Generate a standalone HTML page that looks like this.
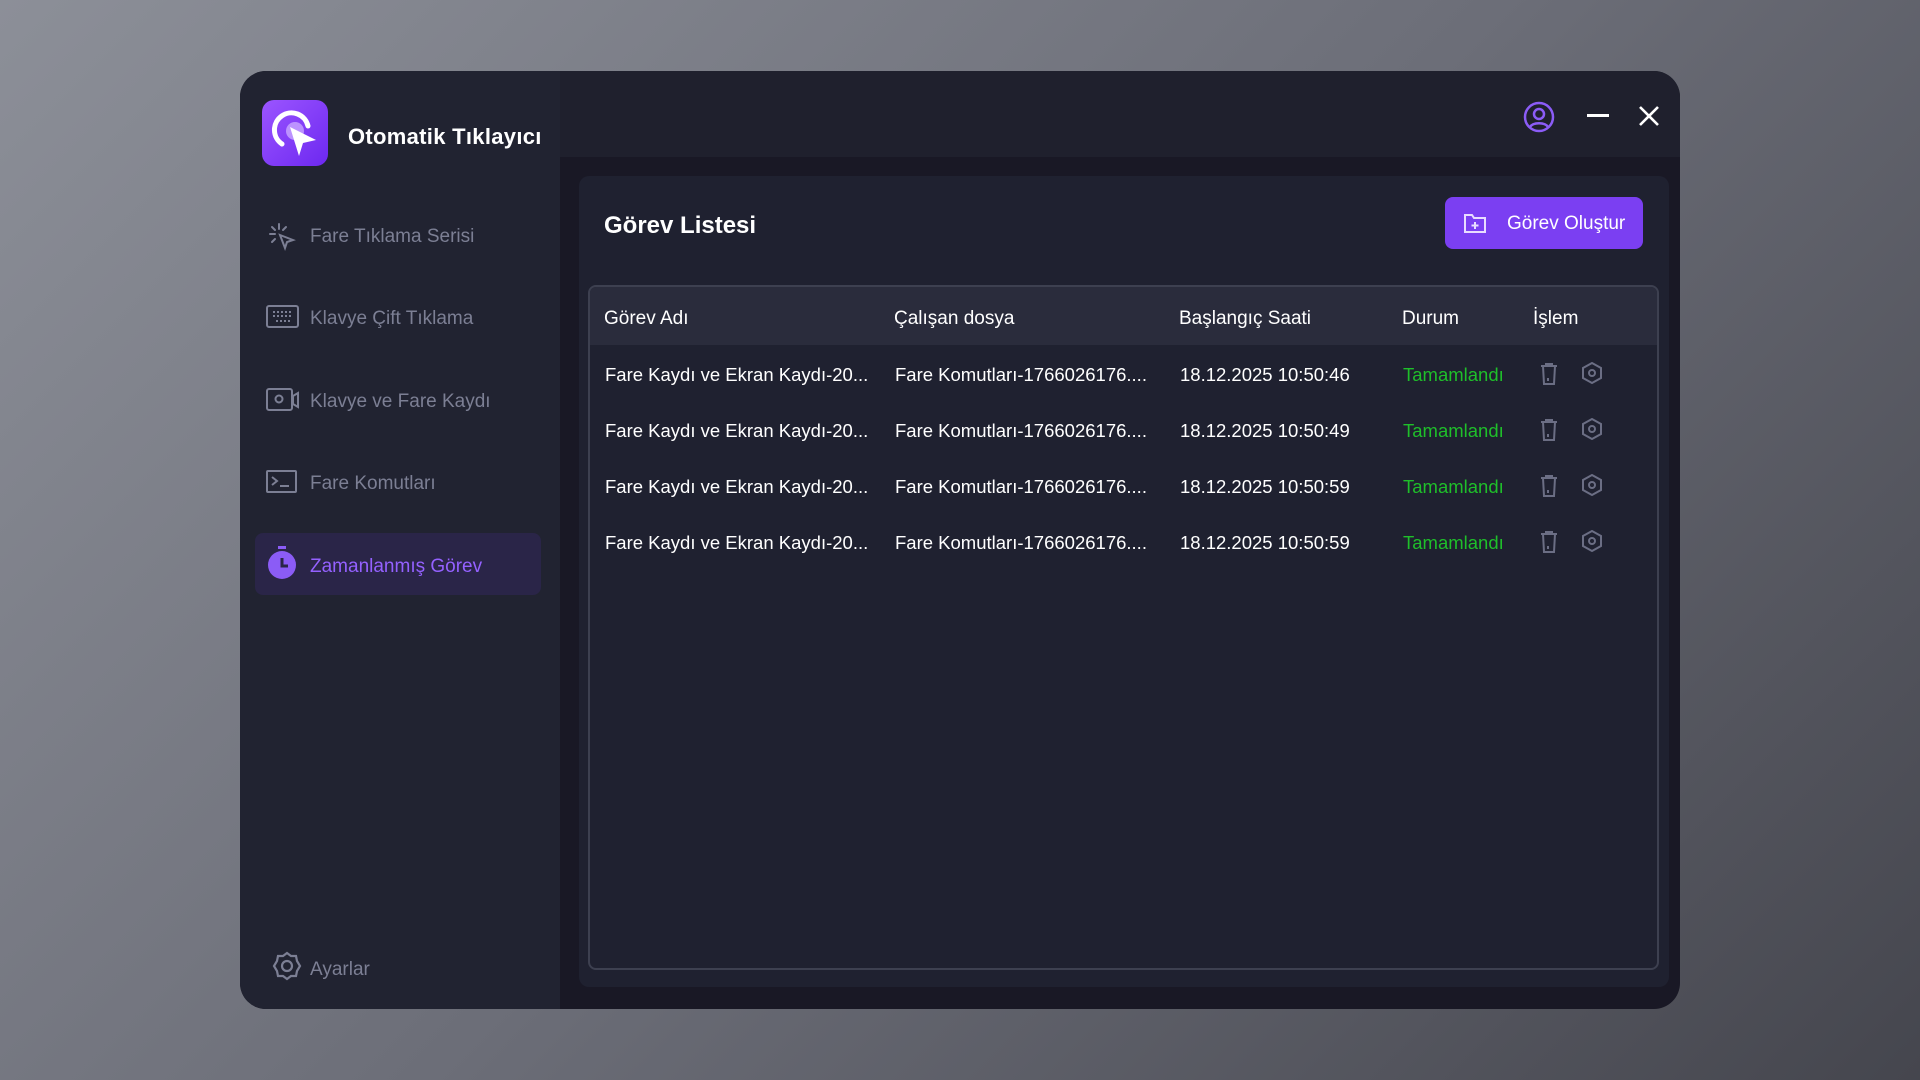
<!DOCTYPE html>
<html><head><meta charset="utf-8"><style>
*{margin:0;padding:0;box-sizing:border-box}
body{width:1920px;height:1080px;overflow:hidden;background:linear-gradient(135deg,#8c8f98 0%,#6c6e78 50%,#45464e 100%);font-family:"Liberation Sans",sans-serif;position:relative}
.win{position:absolute;left:240px;top:71px;width:1440px;height:938px;border-radius:26px;background:#191825;overflow:hidden}
.side{position:absolute;left:0;top:0;width:320px;height:100%;background:#212331}
.top{position:absolute;left:320px;top:0;right:0;height:86px;background:#1f202d}
.logo{position:absolute;left:22px;top:29px;width:66px;height:66px;border-radius:12px;background:linear-gradient(135deg,#9b55ff,#6d28f0)}
.title{position:absolute;left:108px;top:53px;color:#fff;font-weight:bold;font-size:22px;letter-spacing:0.3px}
.nav{position:absolute;left:70px;color:#7c7f94;font-size:19px;margin-top:2px}
.ic{position:absolute;left:26px}
.active{position:absolute;left:15px;top:462px;width:286px;height:62px;border-radius:8px;background:#2a2548}
.panel{position:absolute;left:339px;top:105px;width:1090px;height:811px;background:#1f2130;border-radius:10px}
.ptitle{position:absolute;left:25px;top:36px;color:#fff;font-weight:bold;font-size:24px}
.btn{position:absolute;left:866px;top:21px;width:198px;height:52px;background:#7b3ff2;border-radius:8px;color:#fff;font-size:19px;line-height:54px;padding-left:62px}
.tbl{position:absolute;left:9px;top:109px;width:1071px;height:685px;border:2px solid #3d4050;border-radius:8px;overflow:hidden}
.th{position:absolute;left:0;top:0;right:0;height:58px;background:#2a2c3c}
.c{position:absolute;color:#fff;font-size:19px;white-space:nowrap}
.g{color:#1fbf2a}
</style></head><body>
<div class="win">
<div class="side">
 <div class="logo"><svg width="66" height="66" viewBox="0 0 66 66"><path d="M20 44 A17 17 0 1 1 46 26" fill="none" stroke="#fff" stroke-width="5" stroke-linecap="round"/><circle cx="33" cy="31" r="9" fill="#c9a8ff" opacity=".8"/><path d="M28 27 L54 40 L41 43 L37 56 Z" fill="#fff"/></svg></div>
 <div class="title">Otomatik Tıklayıcı</div>
 <svg class="ic" style="top:150px" width="32" height="32" viewBox="0 0 32 32" fill="none" stroke="#7c7f94" stroke-width="2" stroke-linecap="round"><path d="M13 3v5M4 13h5M6 6l3 3M20 6l-3 3M6 21l3-3"/><path d="M14 14l13 5-6 2-2 6z"/></svg>
 <div class="nav" style="top:153px">Fare Tıklama Serisi</div>
 <svg class="ic" style="top:233px" width="34" height="26" viewBox="0 0 34 26" fill="none" stroke="#7c7f94" stroke-width="2"><rect x="1" y="2" width="31" height="21" rx="2"/><path d="M7 8h20M7 12h20M10 17h14" stroke-dasharray="2 2"/></svg>
 <div class="nav" style="top:235px">Klavye Çift Tıklama</div>
 <svg class="ic" style="top:316px" width="34" height="26" viewBox="0 0 34 26" fill="none" stroke="#7c7f94" stroke-width="2"><rect x="1" y="2" width="25" height="21" rx="2"/><circle cx="13" cy="12" r="3.5"/><path d="M27 9l5-3v14l-5-3z"/></svg>
 <div class="nav" style="top:318px">Klavye ve Fare Kaydı</div>
 <svg class="ic" style="top:398px" width="32" height="26" viewBox="0 0 32 26" fill="none" stroke="#7c7f94" stroke-width="2"><rect x="1" y="2" width="29" height="21" rx="1"/><path d="M6 8l5 4-5 4M14 17h9"/></svg>
 <div class="nav" style="top:400px">Fare Komutları</div>
 <div class="active"></div>
 <svg class="ic" style="top:474px" width="32" height="36" viewBox="0 0 32 36"><rect x="12" y="1" width="8" height="3" fill="#8b5cf6"/><circle cx="16" cy="20" r="14" fill="#8b5cf6"/><path d="M16 13v8h6" stroke="#2a2548" stroke-width="3" fill="none"/></svg>
 <div class="nav" style="top:483px;color:#9461ff">Zamanlanmış Görev</div>
 <svg class="ic" style="top:880px;left:32px" width="30" height="30" viewBox="0 0 30 30" fill="none" stroke="#7c7f94" stroke-width="2.2"><path d="M15 2l4 3 5 0 1 5 3 5-3 5-1 5-5 0-4 3-4-3-5 0-1-5-3-5 3-5 1-5 5 0z"/><circle cx="15" cy="15" r="5"/></svg>
 <div class="nav" style="top:886px">Ayarlar</div>
</div>
<div class="top">
 <svg style="position:absolute;left:963px;top:30px" width="32" height="32" viewBox="0 0 32 32" fill="none" stroke="#8b5cf6" stroke-width="2.5"><circle cx="16" cy="16" r="14"/><circle cx="16" cy="13" r="5"/><path d="M7 26c3-5 15-5 18 0"/></svg>
 <div style="position:absolute;left:1027px;top:43px;width:22px;height:3px;background:#fff"></div>
 <svg style="position:absolute;left:1078px;top:34px" width="22" height="22" viewBox="0 0 22 22" stroke="#fff" stroke-width="2.6"><path d="M2 2l18 18M20 2L2 20"/></svg>
</div>
<div class="panel">
 <div class="ptitle">Görev Listesi</div>
 <div class="btn"><svg style="position:absolute;left:18px;top:15px" width="24" height="22" viewBox="0 0 24 22" fill="none" stroke="#e8dcff" stroke-width="2"><path d="M2 3h7l2 3h11v14H2z"/><path d="M12 10v7M8.5 13.5h7"/></svg>Görev Oluştur</div>
 <div class="tbl">
  <div class="th"></div>
  <div class="c" style="left:14px;top:21px">Görev Adı</div>
  <div class="c" style="left:304px;top:21px">Çalışan dosya</div>
  <div class="c" style="left:589px;top:21px">Başlangıç Saati</div>
  <div class="c" style="left:812px;top:21px">Durum</div>
  <div class="c" style="left:943px;top:21px">İşlem</div>
 </div>
</div>
</div>
<div id="rows"></div>
<script>
var t=["10:50:46","10:50:49","10:50:59","10:50:59"],h="";
t.forEach(function(s,i){var y=364+i*56;
h+='<div class="c" style="left:605px;top:'+y+'px;font-size:18.5px">Fare Kaydı ve Ekran Kaydı-20...</div>'+
'<div class="c" style="left:895px;top:'+y+'px;font-size:18.5px">Fare Komutları-1766026176....</div>'+
'<div class="c" style="left:1180px;top:'+y+'px;font-size:18.5px">18.12.2025 '+s+'</div>'+
'<div class="c g" style="left:1403px;top:'+y+'px;font-size:18.5px">Tamamlandı</div>'+
'<svg style="position:absolute;left:1539px;top:'+(y-2)+'px" width="20" height="24" viewBox="0 0 20 24" fill="none" stroke="#6b6e84" stroke-width="2"><path d="M2 4h16M7 4V2h6v2M4 4l1 18h10l1-18M9 16v3"/></svg>'+
'<svg style="position:absolute;left:1581px;top:'+(y-2)+'px" width="22" height="22" viewBox="0 0 22 22" fill="none" stroke="#6b6e84" stroke-width="2"><path d="M11 1l9 5v10l-9 5-9-5V6z"/><circle cx="11" cy="11" r="3"/></svg>';});
document.getElementById("rows").innerHTML=h;
</script>
</body></html>
